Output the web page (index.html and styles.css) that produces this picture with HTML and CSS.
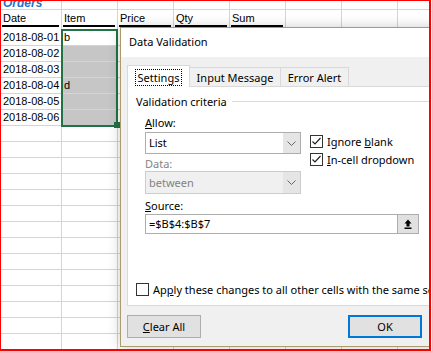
FILE: index.html
```html
<!DOCTYPE html>
<html lang="en">
  <head>
    <meta charset="UTF-8" />
    <title>Data Validation</title>
    <link rel="stylesheet" href="styles.css">
  </head>
  <body>
    <div class="screen">
      <div class="sheet">
        <div class="row row-title">
          <div class="cell col-a"><span class="sheet-title">Orders</span></div>
          <div class="cell"></div><div class="cell"></div><div class="cell"></div><div class="cell"></div><div class="cell"></div><div class="cell"></div><div class="cell"></div>
        </div>
        <div class="row row-head">
          <div class="cell col-a"><div class="hd">Date</div></div>
          <div class="cell"><div class="hd">Item</div></div>
          <div class="cell"><div class="hd">Price</div></div>
          <div class="cell"><div class="hd">Qty</div></div>
          <div class="cell"><div class="hd">Sum</div></div>
          <div class="cell"></div><div class="cell"></div><div class="cell"></div>
        </div>
        <div class="row"><div class="cell col-a">2018-08-01</div><div class="cell">b</div><div class="cell"></div><div class="cell"></div><div class="cell"></div><div class="cell"></div><div class="cell"></div><div class="cell"></div></div>
        <div class="row"><div class="cell col-a">2018-08-02</div><div class="cell shade"></div><div class="cell"></div><div class="cell"></div><div class="cell"></div><div class="cell"></div><div class="cell"></div><div class="cell"></div></div>
        <div class="row"><div class="cell col-a">2018-08-03</div><div class="cell shade"></div><div class="cell"></div><div class="cell"></div><div class="cell"></div><div class="cell"></div><div class="cell"></div><div class="cell"></div></div>
        <div class="row"><div class="cell col-a">2018-08-04</div><div class="cell shade">d</div><div class="cell"></div><div class="cell"></div><div class="cell"></div><div class="cell"></div><div class="cell"></div><div class="cell"></div></div>
        <div class="row"><div class="cell col-a">2018-08-05</div><div class="cell shade"></div><div class="cell"></div><div class="cell"></div><div class="cell"></div><div class="cell"></div><div class="cell"></div><div class="cell"></div></div>
        <div class="row"><div class="cell col-a">2018-08-06</div><div class="cell shade"></div><div class="cell"></div><div class="cell"></div><div class="cell"></div><div class="cell"></div><div class="cell"></div><div class="cell"></div></div>
        <div class="row"><div class="cell col-a"></div><div class="cell"></div><div class="cell"></div><div class="cell"></div><div class="cell"></div><div class="cell"></div><div class="cell"></div><div class="cell"></div></div>
        <div class="row"><div class="cell col-a"></div><div class="cell"></div><div class="cell"></div><div class="cell"></div><div class="cell"></div><div class="cell"></div><div class="cell"></div><div class="cell"></div></div>
        <div class="row"><div class="cell col-a"></div><div class="cell"></div><div class="cell"></div><div class="cell"></div><div class="cell"></div><div class="cell"></div><div class="cell"></div><div class="cell"></div></div>
        <div class="row"><div class="cell col-a"></div><div class="cell"></div><div class="cell"></div><div class="cell"></div><div class="cell"></div><div class="cell"></div><div class="cell"></div><div class="cell"></div></div>
        <div class="row"><div class="cell col-a"></div><div class="cell"></div><div class="cell"></div><div class="cell"></div><div class="cell"></div><div class="cell"></div><div class="cell"></div><div class="cell"></div></div>
        <div class="row"><div class="cell col-a"></div><div class="cell"></div><div class="cell"></div><div class="cell"></div><div class="cell"></div><div class="cell"></div><div class="cell"></div><div class="cell"></div></div>
        <div class="row"><div class="cell col-a"></div><div class="cell"></div><div class="cell"></div><div class="cell"></div><div class="cell"></div><div class="cell"></div><div class="cell"></div><div class="cell"></div></div>
        <div class="row"><div class="cell col-a"></div><div class="cell"></div><div class="cell"></div><div class="cell"></div><div class="cell"></div><div class="cell"></div><div class="cell"></div><div class="cell"></div></div>
        <div class="row"><div class="cell col-a"></div><div class="cell"></div><div class="cell"></div><div class="cell"></div><div class="cell"></div><div class="cell"></div><div class="cell"></div><div class="cell"></div></div>
        <div class="row"><div class="cell col-a"></div><div class="cell"></div><div class="cell"></div><div class="cell"></div><div class="cell"></div><div class="cell"></div><div class="cell"></div><div class="cell"></div></div>
        <div class="row"><div class="cell col-a"></div><div class="cell"></div><div class="cell"></div><div class="cell"></div><div class="cell"></div><div class="cell"></div><div class="cell"></div><div class="cell"></div></div>
        <div class="row"><div class="cell col-a"></div><div class="cell"></div><div class="cell"></div><div class="cell"></div><div class="cell"></div><div class="cell"></div><div class="cell"></div><div class="cell"></div></div>
        <div class="row"><div class="cell col-a"></div><div class="cell"></div><div class="cell"></div><div class="cell"></div><div class="cell"></div><div class="cell"></div><div class="cell"></div><div class="cell"></div></div>
        <div class="row"><div class="cell col-a"></div><div class="cell"></div><div class="cell"></div><div class="cell"></div><div class="cell"></div><div class="cell"></div><div class="cell"></div><div class="cell"></div></div>
      </div>

      <div class="selection"><span class="fill-handle"></span></div>

      <div class="dialog">
        <div class="dlg-title">Data Validation</div>
        <div class="dlg-body">
          <div class="tabs">
            <div class="tab active"><span class="focus">Settings</span></div>
            <div class="tab tab-input">Input Message</div>
            <div class="tab tab-error">Error Alert</div>
          </div>
          <div class="panel">
            <div class="legend">Validation criteria<span class="legend-line"></span></div>
            <div class="group">
              <div class="group-top">
                <div class="group-left">
                  <div class="field-label"><u>A</u>llow:</div>
                  <div class="select">
                    <span class="sel-text">List</span>
                    <span class="sel-btn">
                      <svg width="9" height="5" viewBox="0 0 9 5"><polyline points="0.5,0.5 4.5,4.5 8.5,0.5" fill="none" stroke="#666" /></svg>
                    </span>
                  </div>
                  <div class="field-label label-data disabled">Data:</div>
                  <div class="select select-disabled">
                    <span class="sel-text">between</span>
                    <span class="sel-btn">
                      <svg width="9" height="5" viewBox="0 0 9 5"><polyline points="0.5,0.5 4.5,4.5 8.5,0.5" fill="none" stroke="#666" /></svg>
                    </span>
                  </div>
                </div>
                <div class="group-right">
                  <div class="cb-row">
                    <span class="checkbox">
                      <svg width="11" height="11" viewBox="0 0 11 11"><polyline points="1.5,5.5 4,8 9.5,2" fill="none" stroke="#222" stroke-width="1.2" /></svg>
                    </span>
                    <span>Ignore <u>b</u>lank</span>
                  </div>
                  <div class="cb-row">
                    <span class="checkbox">
                      <svg width="11" height="11" viewBox="0 0 11 11"><polyline points="1.5,5.5 4,8 9.5,2" fill="none" stroke="#222" stroke-width="1.2" /></svg>
                    </span>
                    <span><u>I</u>n-cell dropdown</span>
                  </div>
                </div>
              </div>
              <div class="field-label label-source"><u>S</u>ource:</div>
              <div class="source">
                <span class="source-text">=$B$4:$B$7</span>
                <span class="ref-btn">
                  <svg width="8" height="10" viewBox="0 0 8 10">
                    <path d="M4 0.5 L7.5 4.5 H5.5 V7.5 H2.5 V4.5 H0.5 Z" fill="#000" />
                    <rect x="0.5" y="8.5" width="7" height="1.5" fill="#000" />
                  </svg>
                </span>
              </div>
            </div>
            <div class="cb-row apply-row">
              <span class="checkbox"></span>
              <span>Ap<u>p</u>ly these changes to all other cells with the same settings</span>
            </div>
          </div>
          <div class="dlg-footer">
            <div class="btn"><u>C</u>lear All</div>
            <div class="btn btn-default">OK</div>
          </div>
        </div>
      </div>
    </div>
  </body>
</html>
```

FILE: styles.css
```css
* {
  box-sizing: border-box;
}
body {
  margin: 0;
  background: #fff;
}
.screen {
  position: relative;
  width: 431px;
  height: 351px;
  overflow: hidden;
  border-style: solid;
  border-color: #ff0000;
  border-width: 1px 2px 2px 1px;
  background: #fff;
  font-family: "Liberation Sans", Arial, sans-serif;
  color: #000;
}

/* sheet grid */
.row {
  display: flex;
  height: 16px;
}
.cell {
  flex: 0 0 56px;
  height: 100%;
  border-right: 1px solid #d4d4d4;
  border-bottom: 1px solid #d4d4d4;
  padding-left: 2px;
  font-size: 11px;
  line-height: 15px;
  white-space: nowrap;
  overflow: hidden;
}
.col-a {
  flex-basis: 61px;
}
.cell.shade {
  background: #c6c6c6;
}
.row-title {
  height: 9px;
}
.sheet-title {
  display: block;
  margin-top: -4px;
  font-size: 12px;
  line-height: 12px;
  font-style: italic;
  font-weight: bold;
  color: #2672c9;
}
.row-head {
  height: 20px;
}
.row-head .cell {
  border-bottom: none;
  padding: 2px 0 0 0;
  line-height: 13px;
}
.hd {
  margin: 0 2px 0 1px;
  padding-left: 1px;
  border-bottom: 2px solid #000;
}
.selection {
  position: absolute;
  left: 60px;
  top: 28px;
  width: 57px;
  height: 98px;
  border: 2px solid #217346;
}
.fill-handle {
  position: absolute;
  right: -4px;
  bottom: -3px;
  width: 6px;
  height: 6px;
  background: #217346;
}

/* dialog */
.dialog {
  position: absolute;
  left: 119px;
  top: 26px;
  width: 340px;
  height: 320px;
  border: 1px solid #ab9b6e;
  background: #f0f0f0;
  box-shadow: 0 0 12px rgba(0, 0, 0, 0.2);
  font-family: "Noto Sans", "Liberation Sans", sans-serif;
  font-size: 11px;
  line-height: 15px;
  color: #000;
}
.dlg-title {
  height: 29px;
  background: #fff;
  padding: 6px 0 0 8px;
}
.dlg-body {
  padding: 8px 6px 0 6px;
}
.tabs {
  display: flex;
  align-items: flex-end;
  height: 21px;
}
.tab {
  height: 19px;
  border: 1px solid #d9d9d9;
  border-bottom: none;
  background: #f0f0f0;
  text-align: center;
  padding-top: 2px;
  margin-left: -1px;
  white-space: nowrap;
}
.tab.active {
  position: relative;
  z-index: 1;
  width: 63px;
  height: 22px;
  margin: 0 0 -1px 0;
  padding-top: 3px;
  background: #fff;
}
.tab-input {
  width: 92px;
}
.tab-error {
  width: 69px;
}
.focus {
  display: inline-block;
  padding: 0 2px;
  border: 1px dotted #000;
}
.panel {
  height: 220px;
  border: 1px solid #d9d9d9;
  background: #fff;
  padding: 7px 0 0 8px;
}
.legend {
  display: flex;
  align-items: center;
  height: 15px;
  white-space: nowrap;
}
.legend-line {
  flex: 1;
  height: 1px;
  margin-left: 5px;
  background: #dcdcdc;
}
.group {
  padding-left: 9px;
  margin-top: 6px;
}
.group-top {
  display: flex;
}
.group-left {
  width: 156px;
}
.group-right {
  margin-left: 9px;
  padding-top: 17px;
}
.field-label {
  height: 15px;
}
.disabled {
  color: #838383;
}
.label-data {
  margin-top: 2px;
}
.label-source {
  margin-top: 4px;
}
.select {
  display: flex;
  height: 22px;
  margin-top: 2px;
  border: 1px solid #adadad;
  background: #fff;
  line-height: 20px;
}
.select-disabled {
  height: 23px;
  margin-top: 0;
  border-color: #cccccc;
  background: #f0f0f0;
  color: #838383;
  line-height: 21px;
}
.sel-text {
  padding-left: 3px;
}
.sel-btn {
  display: flex;
  align-items: center;
  justify-content: center;
  width: 17px;
  margin-left: auto;
  background: #e5e5e5;
}
.cb-row {
  display: flex;
  align-items: center;
  gap: 4px;
  height: 18px;
  white-space: nowrap;
}
.checkbox {
  display: flex;
  align-items: center;
  justify-content: center;
  flex: 0 0 13px;
  width: 13px;
  height: 13px;
  border: 1px solid #333;
  background: #fff;
}
.source {
  display: flex;
  width: 274px;
  height: 20px;
  margin-top: 1px;
  border: 1px solid #adadad;
  line-height: 18px;
}
.source-text {
  padding-left: 3px;
}
.ref-btn {
  display: flex;
  align-items: center;
  justify-content: center;
  width: 21px;
  margin-left: auto;
  border-left: 1px solid #adadad;
  background: #e1e1e1;
}
.apply-row {
  height: 15px;
  margin-top: 48px;
}
.dlg-footer {
  display: flex;
  padding-top: 9px;
}
.btn {
  width: 74px;
  height: 23px;
  border: 1px solid #adadad;
  background: #e1e1e1;
  text-align: center;
  line-height: 21px;
}
.btn-default {
  margin-left: 147px;
  border: 2px solid #0078d7;
  line-height: 19px;
}
```
